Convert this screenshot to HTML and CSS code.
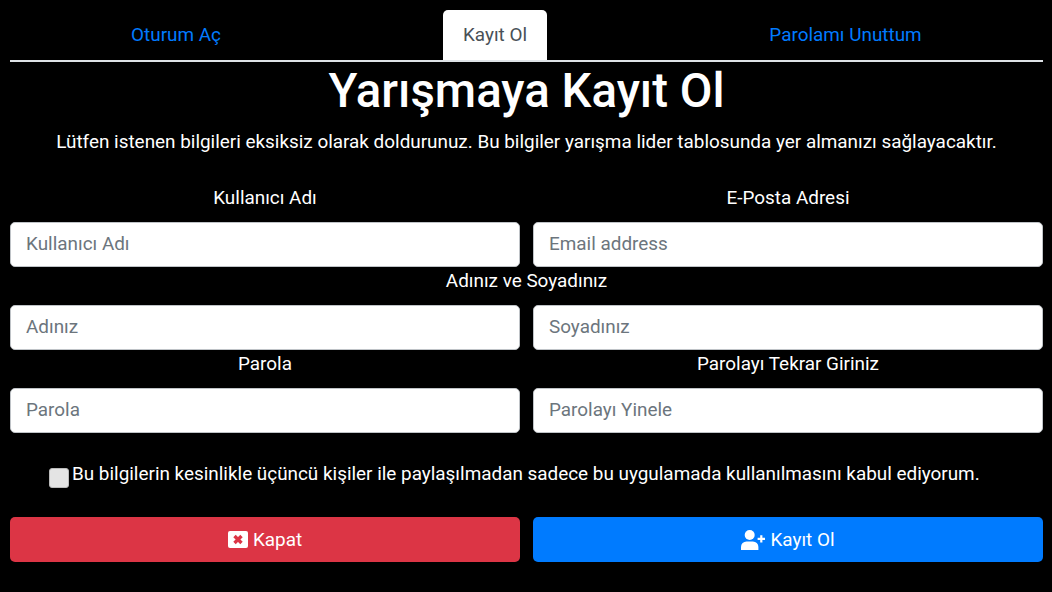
FILE: index.html
```html
<!DOCTYPE html>
<html lang="en">
<head>
    <meta charset="UTF-8">
    <meta name="viewport" content="width=device-width, initial-scale=1.0">
    <title>Yarışmaya Kayıt Ol</title>
    <link rel="stylesheet" href="styles.css">
</head>
<body>
    <div class="container">
        <ul class="tabs">
            <li class="tab-item"><a class="tab-link" href="#">Oturum Aç</a></li>
            <li class="tab-item"><a class="tab-link active" href="#">Kayıt Ol</a></li>
            <li class="tab-item"><a class="tab-link" href="#">Parolamı Unuttum</a></li>
        </ul>

        <h1 class="title">Yarışmaya Kayıt Ol</h1>
        <p class="lead">Lütfen istenen bilgileri eksiksiz olarak doldurunuz. Bu bilgiler yarışma lider tablosunda yer almanızı sağlayacaktır.</p>

        <form class="signup-form">
            <div class="form-row">
                <div class="field">
                    <label for="username">Kullanıcı Adı</label>
                    <input type="text" id="username" placeholder="Kullanıcı Adı">
                </div>
                <div class="field">
                    <label for="email">E-Posta Adresi</label>
                    <input type="email" id="email" placeholder="Email address">
                </div>
            </div>

            <div class="row-label">Adınız ve Soyadınız</div>
            <div class="form-row">
                <input type="text" id="firstName" placeholder="Adınız">
                <input type="text" id="lastName" placeholder="Soyadınız">
            </div>

            <div class="form-row">
                <div class="field">
                    <label for="password">Parola</label>
                    <input type="password" id="password" placeholder="Parola">
                </div>
                <div class="field">
                    <label for="password2">Parolayı Tekrar Giriniz</label>
                    <input type="password" id="password2" placeholder="Parolayı Yinele">
                </div>
            </div>

            <label class="consent">
                <span class="checkbox"></span>
                <span>Bu bilgilerin kesinlikle üçüncü kişiler ile paylaşılmadan sadece bu uygulamada kullanılmasını kabul ediyorum.</span>
            </label>

            <div class="form-row">
                <button type="button" class="btn btn-danger">
                    <svg class="icon" viewBox="0 0 20 17" width="20" height="17">
                        <rect width="20" height="17" rx="2" fill="#fff"/>
                        <path d="M6.5 5 13.5 12M13.5 5 6.5 12" stroke="#dc3545" stroke-width="3.4"/>
                    </svg>
                    Kapat
                </button>
                <button type="button" class="btn btn-primary">
                    <svg class="icon" viewBox="0 0 24 20" width="24" height="20">
                        <circle cx="8.7" cy="5" r="5" fill="#fff"/>
                        <path d="M0 20V17a5.5 5.5 0 0 1 5.5-5.5h6.4a5.5 5.5 0 0 1 5.5 5.5v3z" fill="#fff"/>
                        <path d="M16.6 8.8h7.4M20.3 5.2v7.2" stroke="#fff" stroke-width="2.2"/>
                    </svg>
                    Kayıt Ol
                </button>
            </div>
        </form>
    </div>
</body>
</html>
```

FILE: styles.css
```css
* {
    box-sizing: border-box;
    margin: 0;
    padding: 0;
}

body {
    background-color: #000;
    color: #fff;
    font-family: Roboto, "Liberation Sans", sans-serif;
    font-size: 18.9px;
    line-height: 27px;
}

.container {
    padding: 10px 9px 0 10px;
}

.tabs {
    display: grid;
    grid-template-columns: 332fr 306fr 395fr;
    list-style: none;
    border-bottom: 2px solid #dee2e6;
    height: 52px;
}

.tab-item {
    display: flex;
    justify-content: center;
}

.tab-link {
    display: block;
    height: 50px;
    padding: 11px 20px;
    color: #007bff;
    text-decoration: none;
    border-radius: 5px 5px 0 0;
}

.tab-link.active {
    background-color: #fff;
    color: #495057;
}

.title {
    font-size: 47.4px;
    font-weight: 500;
    line-height: 56px;
    text-align: center;
    margin-top: 1px;
}

.lead {
    text-align: center;
    margin-top: 9px;
}

.signup-form {
    margin-top: 29px;
}

.form-row {
    display: grid;
    grid-template-columns: 1fr 1fr;
    gap: 13px;
}

.field label {
    display: block;
    text-align: center;
    margin-bottom: 11px;
}

.row-label {
    text-align: center;
    height: 27px;
    margin-bottom: 11px;
}

input {
    display: block;
    width: 100%;
    height: 45px;
    padding: 0 15px 2px;
    background-color: #fff;
    border: 1px solid #bfc3c7;
    border-radius: 5px;
    color: #495057;
    font-family: inherit;
    font-size: 18.9px;
}

input::placeholder {
    color: #6c757d;
    opacity: 1;
}

.consent {
    display: flex;
    align-items: flex-start;
    margin: 27px 0 29px 39px;
}

.checkbox {
    flex: none;
    width: 20px;
    height: 20px;
    margin: 8px 3px 0 0;
    background-color: #e4e4e4;
    border: 1px solid #bbb;
    border-radius: 3px;
}

.btn {
    display: flex;
    align-items: center;
    justify-content: center;
    gap: 5px;
    height: 45px;
    border: none;
    border-radius: 5px;
    color: #fff;
    font-family: inherit;
    font-size: 18.9px;
}

.btn-danger {
    background-color: #dc3545;
}

.btn-primary {
    background-color: #007bff;
}

.icon {
    display: block;
}
```
